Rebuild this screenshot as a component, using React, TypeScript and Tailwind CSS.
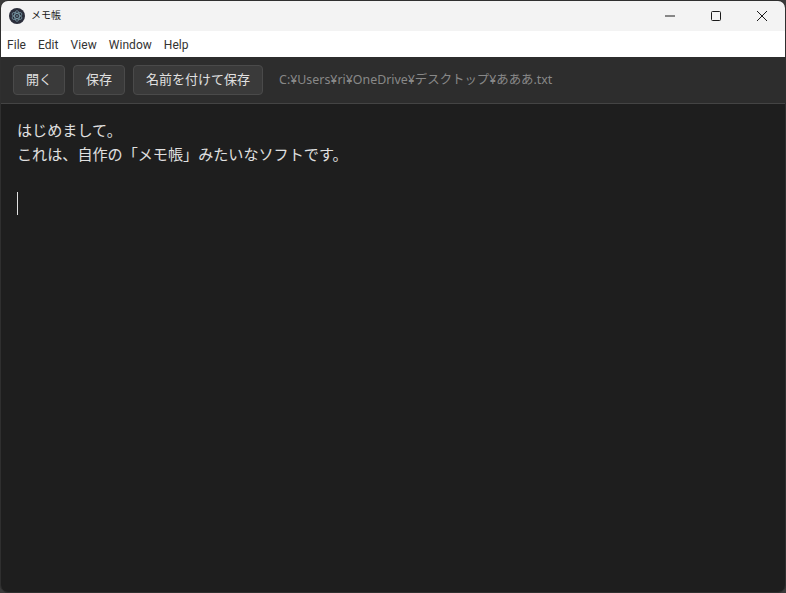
const menus = ["File", "Edit", "View", "Window", "Help"];
const buttons = ["開く", "保存", "名前を付けて保存"];

function ElectronIcon() {
  return (
    <svg viewBox="0 0 16 16" className="h-4 w-4 shrink-0">
      <circle cx="8" cy="8" r="8" fill="#2b2e3b" />
      <g fill="none" stroke="#8fb8c4" strokeWidth="0.6">
        <ellipse cx="8" cy="8" rx="5.4" ry="2.4" transform="rotate(30 8 8)" />
        <ellipse cx="8" cy="8" rx="5.4" ry="2.4" transform="rotate(90 8 8)" />
        <ellipse cx="8" cy="8" rx="5.4" ry="2.4" transform="rotate(150 8 8)" />
      </g>
      <circle cx="8" cy="8" r="0.8" fill="#8fb8c4" />
    </svg>
  );
}

export default function App() {
  return (
    <div className="h-[593px] w-[786px] bg-[#3a3a3a]">
      <div className="flex h-full flex-col overflow-hidden rounded-lg border border-[#2f2f2f] font-['Noto_Sans','Noto_Sans_CJK_JP',sans-serif]">
        {/* タイトルバー */}
        <div className="flex h-[30px] shrink-0 items-center bg-[#f3f3f3] pl-2">
          <ElectronIcon />
          <span className="mb-[2px] ml-[6px] text-[10px] text-[#1a1a1a]">メモ帳</span>
          <div className="ml-auto flex h-full">
            <div className="flex w-[46px] items-center justify-center">
              <svg viewBox="0 0 10 10" className="h-[10px] w-[10px]">
                <path d="M0 5h10" stroke="#1a1a1a" strokeWidth="1" />
              </svg>
            </div>
            <div className="flex w-[46px] items-center justify-center">
              <svg viewBox="0 0 10 10" className="h-[10px] w-[10px]">
                <rect x="0.5" y="0.5" width="9" height="9" rx="1" fill="none" stroke="#1a1a1a" strokeWidth="1" />
              </svg>
            </div>
            <div className="flex w-[46px] items-center justify-center">
              <svg viewBox="0 0 10 10" className="h-[10px] w-[10px]">
                <path d="M0 0l10 10M10 0L0 10" stroke="#1a1a1a" strokeWidth="1" />
              </svg>
            </div>
          </div>
        </div>

        {/* メニュー */}
        <div className="flex h-[26px] shrink-0 items-center gap-3 bg-white pt-[2px] pl-[6px] font-['Roboto',sans-serif] text-xs tracking-[0.05px] text-[#333]">
          {menus.map((m) => (
            <span key={m}>{m}</span>
          ))}
        </div>

        {/* ツールバー */}
        <div className="flex h-[47px] shrink-0 items-center gap-2 border-b border-[#444] bg-[#2d2d2d] pl-3">
          {buttons.map((b) => (
            <button
              key={b}
              className="h-[30px] rounded border border-[#4a4a4a] bg-[#3a3a3a] px-3 text-[13px] text-[#e0e0e0]"
            >
              {b}
            </button>
          ))}
          <span className="ml-2 text-[12.4px] text-[#888]">C:¥Users¥ri¥OneDrive¥デスクトップ¥あああ.txt</span>
        </div>

        {/* エディタ */}
        <div className="flex-1 bg-[#1e1e1e] px-4 pt-[14px] text-[15.1px] leading-6 text-[#e0e0e0]">
          <p>はじめまして。</p>
          <p>これは、自作の「メモ帳」みたいなソフトです。</p>
          <p className="h-[26px]"></p>
          <div className="h-[23px] w-px bg-[#e0e0e0]"></div>
        </div>
      </div>
    </div>
  );
}
